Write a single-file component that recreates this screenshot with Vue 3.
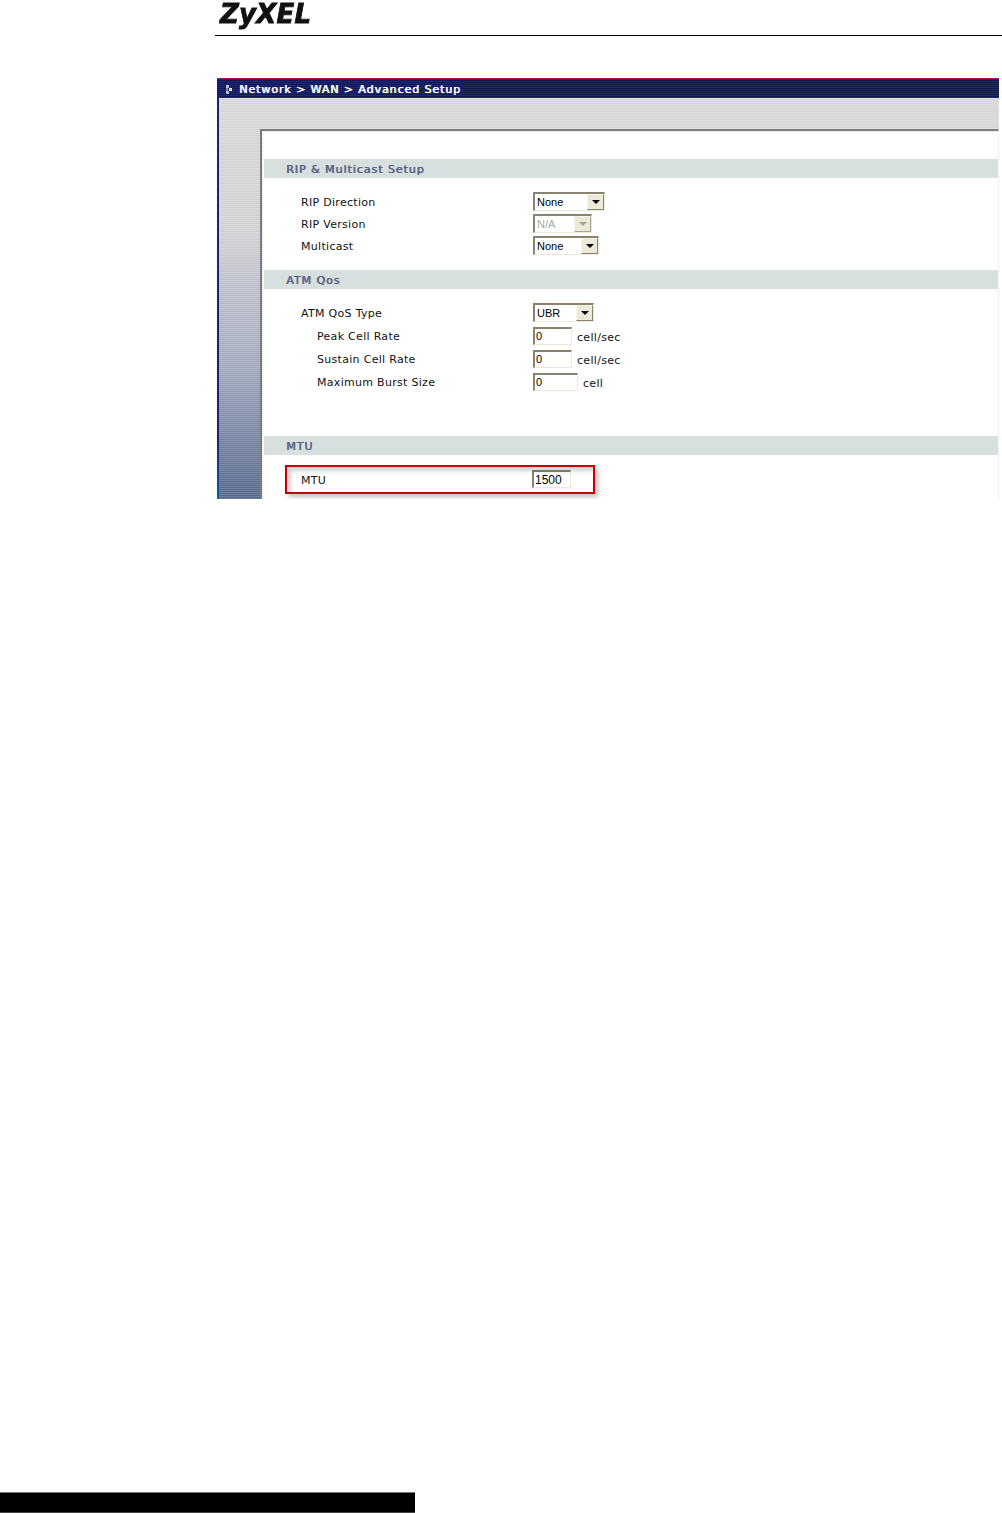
<template>
  <div class="page">
    <header class="doc-head">
      <div class="logo">ZyXEL</div>
    </header>

    <div class="shot">
      <div class="titlebar">
        <svg class="crumb-icon" width="7" height="9" viewBox="0 0 7 9">
          <rect x="0" y="0" width="3" height="3" fill="#b9bdd0" />
          <rect x="3" y="3" width="3" height="3" fill="#e4e6ee" />
          <rect x="0" y="6" width="3" height="3" fill="#b9bdd0" />
          <rect x="0" y="3" width="2" height="3" fill="#7f86a8" />
        </svg>
        <span>Network &gt; WAN &gt; Advanced Setup</span>
      </div>

      <div class="frame">
        <div class="panel">
          <section v-for="group in groups" :key="group.title" class="group" :class="group.cls">
            <h2 class="group-title">{{ group.title }}</h2>
            <div class="rows">
              <div v-for="row in group.rows" :key="row.label" class="row" :class="{ sub: row.sub }">
                <label class="row-label">{{ row.label }}</label>
                <div v-if="row.select" class="select" :class="{ off: row.off }" :style="{ width: row.w + 'px' }">
                  <span class="select-val">{{ row.select }}</span>
                  <span class="select-btn"><i class="arrow"></i></span>
                </div>
                <div v-else class="field" :style="{ width: row.w + 'px' }">{{ row.value }}</div>
                <span v-if="row.unit" class="unit">{{ row.unit }}</span>
              </div>
            </div>
          </section>
          <div class="callout"></div>
        </div>
      </div>
    </div>

    <div class="footer-bar"></div>
  </div>
</template>

<script setup>
const groups = [
  {
    title: 'RIP & Multicast Setup',
    cls: 'g-rip',
    rows: [
      { label: 'RIP Direction', select: 'None', w: 72 },
      { label: 'RIP Version', select: 'N/A', w: 59, off: true },
      { label: 'Multicast', select: 'None', w: 66 }
    ]
  },
  {
    title: 'ATM Qos',
    cls: 'g-atm',
    rows: [
      { label: 'ATM QoS Type', select: 'UBR', w: 61 },
      { label: 'Peak Cell Rate', value: '0', w: 39, unit: 'cell/sec', sub: true },
      { label: 'Sustain Cell Rate', value: '0', w: 39, unit: 'cell/sec', sub: true },
      { label: 'Maximum Burst Size', value: '0', w: 45, unit: 'cell', sub: true }
    ]
  },
  {
    title: 'MTU',
    cls: 'g-mtu',
    rows: [{ label: 'MTU', value: '1500', w: 39 }]
  }
]
</script>

<style>
html,
body {
  margin: 0;
  background: #fff;
}
</style>

<style scoped>
.page {
  position: relative;
  width: 1002px;
  height: 1513px;
  overflow: hidden;
  background: #fff;
  font-family: "DejaVu Sans", Verdana, sans-serif;
}

.doc-head {
  margin-left: 215px;
  height: 35px;
  border-bottom: 1px solid #000;
}

.logo {
  padding: 0 0 0 5px;
  font-family: "DejaVu Sans", Verdana, sans-serif;
  font-size: 26px;
  line-height: 29px;
  font-weight: 700;
  font-style: italic;
  letter-spacing: 0.2px;
  color: #111;
  -webkit-text-stroke: 0.8px #111;
  filter: blur(0.3px);
}

.shot {
  width: 782px;
  height: 421px;
  margin: 42px 0 0 217px;
  overflow: hidden;
}

.titlebar {
  display: flex;
  align-items: center;
  gap: 6px;
  box-sizing: border-box;
  height: 20px;
  padding: 1px 0 0 9px;
  border-top: 1px solid #b4142e;
  background: repeating-linear-gradient(to bottom, #20297f 0 1px, #10164e 1px 2px);
  color: #fff;
  font-size: 11px;
  letter-spacing: 0.92px;
  text-shadow: 0.7px 0 0 #fff;
}

.frame {
  box-sizing: border-box;
  height: 401px;
  padding: 31px 0 0 41px;
  border-left: 2px solid #1c2470;
  border-image: linear-gradient(to bottom, #1c2470 0, #1c2470 85%, #0b5f93 100%) 1;
  background:
    repeating-linear-gradient(to bottom, rgba(255, 255, 255, 0.14) 0 1px, rgba(0, 0, 0, 0.035) 1px 2px),
    linear-gradient(to bottom, #dcdcdc 0, #d6d6da 130px, #a4acc0 270px, #56688f 401px);
}

.panel {
  position: relative;
  box-sizing: border-box;
  height: 370px;
  padding: 28px 0 0 2px;
  background: #fff;
  border-top: 2px solid #7c7c7c;
  border-left: 2px solid #7c7c7c;
  border-right: 1px solid #f0f0f0;
  box-shadow: inset 1px 1px 0 #ececec;
}

.group-title {
  box-sizing: border-box;
  margin: 0;
  height: 19px;
  padding: 1px 0 0 22px;
  background: #d7e0df;
  color: #5a6484;
  font-size: 11px;
  line-height: 19px;
  font-weight: 400;
  letter-spacing: 0.96px;
  text-shadow: 0.7px 0 0 #5a6484;
}

.rows {
  display: flex;
  flex-direction: column;
}

.g-rip .rows {
  padding: 13px 0;
}

.g-rip .row {
  height: 22px;
}

.g-atm .rows {
  padding: 13px 0 42px;
}

.g-atm .row {
  height: 23px;
}

.g-mtu .rows {
  padding-top: 14px;
}

.g-mtu .row {
  height: 22px;
}

.row {
  display: flex;
  align-items: center;
  padding-left: 37px;
  font-size: 11px;
  letter-spacing: 0.3px;
  color: #111;
}

.row-label {
  width: 232px;
  flex: none;
}

.row.sub {
  padding-left: 53px;
}

.row.sub .row-label {
  width: 216px;
}

.select {
  display: flex;
  box-sizing: border-box;
  height: 19px;
  margin-top: -1px;
  align-items: center;
  justify-content: space-between;
  padding: 0 0 0 2px;
  border: 1px solid #fff;
  border-top: 2px solid #87836f;
  border-left: 2px solid #87836f;
  border-right-color: #ece9d8;
  border-bottom-color: #ece9d8;
  background: #fff;
  color: #000;
  font-family: "Liberation Sans", Arial, sans-serif;
  font-size: 11px;
  letter-spacing: 0;
}

.g-atm .select {
  margin-top: -2px;
}

.select-btn {
  display: flex;
  align-items: center;
  justify-content: center;
  box-sizing: border-box;
  width: 17px;
  height: 16px;
  background: #ece9d8;
  border-top: 1px solid #f8f6ec;
  border-left: 1px solid #f8f6ec;
  border-right: 1px solid #87836f;
  border-bottom: 1px solid #87836f;
}

.arrow {
  width: 0;
  height: 0;
  border-left: 4px solid transparent;
  border-right: 4px solid transparent;
  border-top: 4px solid #000;
}

.select.off {
  color: #a8a8a0;
}

.select.off .select-btn {
  border-right-color: #a7a595;
  border-bottom-color: #a7a595;
}

.select.off .arrow {
  border-top-color: #a5a5a0;
}

.field {
  box-sizing: border-box;
  height: 18px;
  margin-top: -1px;
  padding-left: 1px;
  border: 1px solid #ece9d8;
  border-top: 2px solid #87836f;
  border-left: 2px solid #87836f;
  background: #fff;
  color: #000;
  font-family: "Liberation Sans", Arial, sans-serif;
  font-size: 11px;
  line-height: 15px;
  letter-spacing: 0;
}

.g-mtu .field {
  margin: -2px 0 0 -1px;
  font-size: 12px;
  line-height: 17px;
}

.unit {
  margin: 2px 0 0 5px;
}

.callout {
  position: absolute;
  left: 23px;
  top: 334px;
  box-sizing: border-box;
  width: 310px;
  height: 29px;
  border: 2px solid #c40000;
  box-shadow:
    3px 3px 5px rgba(0, 0, 0, 0.25),
    inset 4px 4px 4px rgba(0, 0, 0, 0.18);
  pointer-events: none;
}

.footer-bar {
  position: absolute;
  left: 0;
  top: 1492px;
  box-sizing: border-box;
  width: 415px;
  height: 21px;
  background: #000;
  border-top: 1px solid #777;
  border-bottom: 1px solid #444;
}
</style>
